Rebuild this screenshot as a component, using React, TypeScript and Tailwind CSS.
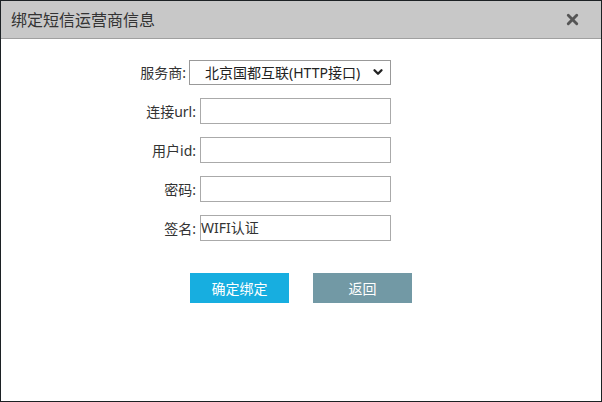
import { ChevronDown, X } from "lucide-react";

const font = { fontFamily: '"Noto Sans", "Noto Sans CJK SC", sans-serif' };

function Row({ label, value }: { label: string; value?: string }) {
  return (
    <div className="flex items-center h-[26px]">
      <label className="w-[196px] pr-[1px] text-right text-[14px] text-[#333]">{label}</label>
      <div className="ml-[3px] w-[191px] h-[26px] border border-[#aaa] bg-white flex items-center text-[14px] text-[#333] leading-none">
        {value}
      </div>
    </div>
  );
}

export default function App() {
  return (
    <div className="w-[602px] h-[402px] border border-[#1c2124] bg-white flex flex-col" style={font}>
      <div className="h-[38px] bg-[#c8c8c8] border-b border-[#a0a0a0] flex items-center justify-between pl-[10px] pr-[20px]">
        <span className="text-[16px] text-[#333]">绑定短信运营商信息</span>
        <X className="w-[17px] h-[17px] text-[#555]" strokeWidth={4} />
      </div>

      <div className="flex flex-col gap-[13px] pt-[20px]">
        <div className="flex items-center h-[26px]">
          <label className="w-[185px] text-right text-[14px] text-[#333]">服务商:</label>
          <div className="ml-[3px] w-[202px] h-[25px] border border-[#999] bg-white flex items-center justify-between pl-[15px] pr-[5px] text-[14px] text-[#222]">
            <span>北京国都互联(HTTP接口)</span>
            <ChevronDown className="w-[14px] h-[14px] text-[#222]" strokeWidth={4} />
          </div>
        </div>
        <Row label="连接url:" />
        <Row label="用户id:" />
        <Row label="密码:" />
        <Row label="签名:" value="WIFI认证" />
      </div>

      <div className="flex gap-[24px] pl-[189px] pt-[32px]">
        <button className="w-[99px] h-[30px] bg-[#17aee0] text-white text-[14px]">确定绑定</button>
        <button className="w-[99px] h-[30px] bg-[#7299a5] text-white text-[14px]">返回</button>
      </div>
    </div>
  );
}
